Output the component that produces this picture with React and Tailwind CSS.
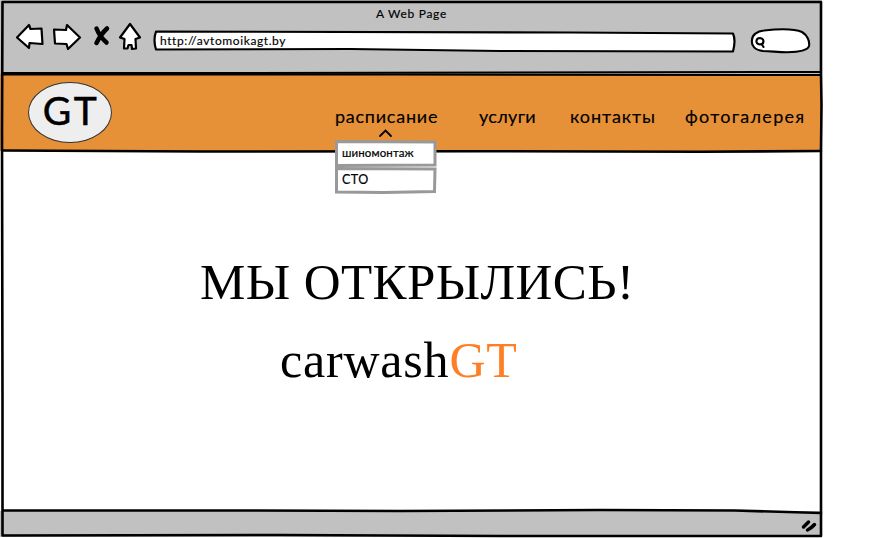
const navItems = [
  { label: 'расписание', style: 'ml-[223px] w-[103px] tracking-[0.75px]' },
  { label: 'услуги', style: 'ml-[41px] w-[57px] tracking-[0.3px]' },
  { label: 'контакты', style: 'ml-[34px] w-[86px] tracking-[0.9px]' },
  { label: 'фотогалерея', style: 'ml-[29px] w-[121px] tracking-[1.3px]' },
];

function NavButtons() {
  return (
    <svg className="mt-[22px] ml-[14px] h-[30px] w-[130px] shrink-0" viewBox="14 22 130 30" fill="#fff" stroke="#000" strokeWidth="2.2" strokeLinejoin="round" strokeLinecap="round">
      <path d="M17 37.5 L29 25 L30.5 29 L41.5 28.5 L42.5 44 L29.5 43 L29 48 Z" />
      <path d="M54 29.5 L66 30 L67 25 L80 37.5 L68 49 L66.5 44 L55 43.5 Z" />
      <path d="M120 37.5 L130 24 L140 37.5 L135.5 39 L136 48.5 L132 49 L131.5 45 L128.5 45 L127.5 48.5 L124 48.5 L124.5 39 Z" />
      <path d="M96.5 28.5 Q100 37 106.500 42.500 M107 28.500 Q101 34 96.500 43" fill="none" strokeWidth="4.5" />
    </svg>
  );
}

function AddressBar() {
  return (
    <div className="relative mt-[30px] ml-[9px] flex h-[23px] w-[583px] shrink-0 items-start">
      <svg className="absolute inset-0" width="583" height="23" viewBox="153 30 583 23" fill="#fff" stroke="#000" strokeWidth="2.2" strokeLinejoin="round">
        <path d="M156 31.500 L570 32.500 L733 33.500 Q736 40 733 51.500 L500 51 L350 49 L156 49.500 Q153 40 156 31.500 Z" />
      </svg>
      <span className="relative ml-[7px] pt-[1px] text-[12px] leading-[20px] tracking-[0.6px] whitespace-nowrap [-webkit-text-stroke:0.15px_black]">http://avtomoikagt.by</span>
    </div>
  );
}

function SearchBox() {
  return (
    <svg className="mt-[27px] ml-[13px] h-[28px] w-[64px] shrink-0" viewBox="749 27 64 28" fill="#fff" stroke="#000" strokeWidth="2.1" strokeLinecap="round" strokeLinejoin="round">
      <path d="M752 40 C752 35 757 31 764 30.500 C778 29 795 29 802 32 C807 35 810 41 809 46 C808 50 799 52 787 52.300 C777 52 771 51.200 763 51 C755 50 751 46 752 40 Z" />
      <path d="M756.500 40.500 Q757 38 760 38 Q763.500 38.500 763.500 41 Q763.500 44.500 760 44.500 Q756 44 756.500 40.500 Z" />
      <path d="M761.500 44 L763.500 47" />
    </svg>
  );
}

function DropItem({ children, outline, style }) {
  return (
    <div className="relative h-[27px] w-[103px]">
      <svg className="absolute inset-0" width="103" height="27" viewBox="0 0 103 27">
        <path d={outline} fill="#fff" stroke="#999" strokeWidth="3" />
      </svg>
      <span className={`relative block pl-[8px] leading-[25px] whitespace-nowrap ${style}`}>{children}</span>
    </div>
  );
}

function SketchFrame() {
  return (
    <svg className="pointer-events-none absolute inset-0" width="826" height="538" viewBox="0 0 826 538" fill="none" stroke="#000" strokeWidth="2.6" strokeLinecap="round" strokeLinejoin="round">
      <path d="M2.500 2 L300 2 L821 2 L821 74 L821.500 105 L821 150 L821 536 L500 536 L280 535 L2.500 535.500 L2.500 400 L2 130 L2.500 2" />
      <path d="M2.500 73 L200 73 L820 72" strokeWidth="2" />
      <path d="M2.500 74.600 L400 74.500 L820 75" strokeWidth="2" />
      <path d="M3 150.500 L200 151.500 L480 151.200 L700 151.700 L821 151" />
      <path d="M3 510.500 L250 510.500 L400 511 L600 510 L735 510.500 L821 513" />
    </svg>
  );
}

export default function App() {
  return (
    <div className="h-[538px] w-[882px] overflow-hidden bg-white font-['Lato','Open_Sans',sans-serif] text-black">
      <div className="relative flex h-[537px] w-[822px] flex-col">
        <header className="relative h-[74px] shrink-0 bg-[#c1c1c1]">
          <div className="absolute top-[5px] left-[376px] text-[12px] leading-[18px] tracking-[0.7px] whitespace-nowrap [-webkit-text-stroke:0.15px_black]">A Web Page</div>
          <div className="flex">
            <NavButtons />
            <AddressBar />
            <SearchBox />
          </div>
        </header>

        <nav className="flex h-[77px] shrink-0 items-start bg-[#e69138]">
          <div className="mt-[8px] ml-[28px] flex h-[61px] w-[84px] shrink-0 items-center justify-center rounded-[50%] border-[1.5px] border-[#333] bg-[#eee] text-[39px] leading-none tracking-[2.5px] [-webkit-text-stroke:0.5px_black]">
            <span className="relative -top-[2px] left-[1px]">GT</span>
          </div>
          {navItems.map((item, i) => (
            <div key={item.label} className={`relative mt-[28px] shrink-0 text-[18px] leading-[28px] whitespace-nowrap [-webkit-text-stroke:0.15px_black] ${item.style}`}>
              {item.label}
              {i === 0 && (
                <svg className="absolute top-[26px] left-[43px]" width="15" height="10" fill="none" stroke="#000" strokeWidth="1.8" strokeLinecap="round">
                  <path d="M2 8 L7.500 2.500 L13 8" />
                </svg>
              )}
            </div>
          ))}
        </nav>

        <main className="flex-1 bg-white font-['Liberation_Serif',serif] text-[50px] leading-[60px]">
          <h1 className="mt-[101px] ml-[200px] text-[51px] tracking-[0.4px] whitespace-nowrap">МЫ ОТКРЫЛИСЬ!</h1>
          <p className="mt-[18px] ml-[280px] tracking-[0.8px] whitespace-nowrap">carwash<span className="text-[#ff7f27]">GT</span></p>
        </main>

        <footer className="flex h-[26px] shrink-0 justify-end bg-[#c1c1c1]">
          <svg className="mt-[7px] mr-[3px]" width="20" height="16" fill="none" stroke="#000" strokeWidth="3.5" strokeLinecap="round">
            <path d="M4.500 9 L9.500 4 M8.500 12 Q12 10.500 15.500 6.500" />
          </svg>
        </footer>
        <SketchFrame />

        <div className="absolute top-[140px] left-[334px] [-webkit-text-stroke:0.2px_black]">
          <DropItem outline="M2.500 1.500 L101 2 L101 25 L2.500 25.500 Z" style="text-[11.5px] tracking-[0.1px]">шиномонтаж</DropItem>
          <DropItem outline="M2.500 1.500 L101 2 L100.500 24.500 L50 25.500 L2.500 25 Z" style="text-[12.5px] tracking-[0.5px]">СТО</DropItem>
        </div>
      </div>
    </div>
  );
}
